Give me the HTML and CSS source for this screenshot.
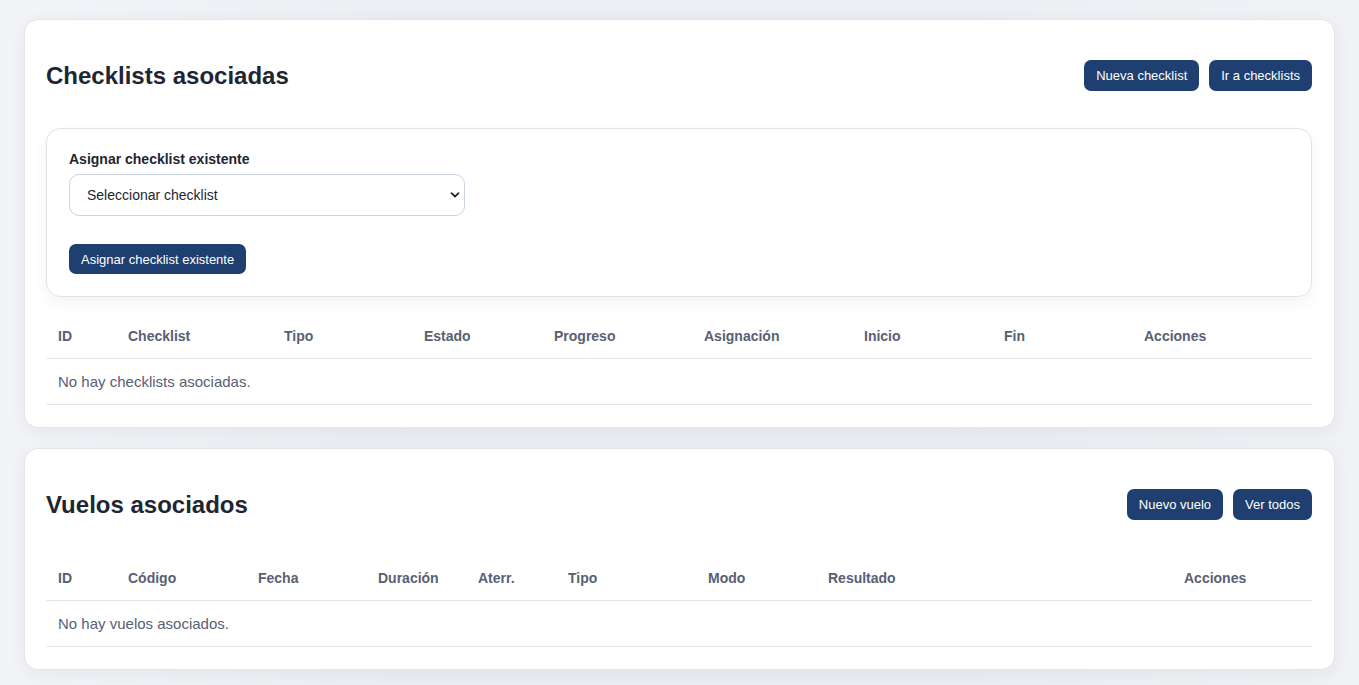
FILE: index.html
```html
<!DOCTYPE html>
<html lang="es">
  <head>
    <meta charset="utf-8">
    <title>Checklists y vuelos asociados</title>
    <link rel="stylesheet" href="styles.css">
  </head>
  <body>
    <section class="card">
      <div class="card-head">
        <h2>Checklists asociadas</h2>
        <div class="actions">
          <button class="btn">Nueva checklist</button>
          <button class="btn">Ir a checklists</button>
        </div>
      </div>

      <div class="assign-box">
        <label for="checklist">Asignar checklist existente</label>
        <div class="select-wrap">
          <select id="checklist">
            <option>Seleccionar checklist</option>
          </select>
          <svg class="chevron" width="10" height="10" viewBox="0 0 10 10">
            <path d="M1.5 3.2 L5 6.7 L8.5 3.2" fill="none" stroke="#222" stroke-width="1.7" stroke-linecap="round" stroke-linejoin="round"/>
          </svg>
        </div>
        <button class="btn">Asignar checklist existente</button>
      </div>

      <table class="list">
        <colgroup>
          <col style="width:70px"><col style="width:156px"><col style="width:140px">
          <col style="width:130px"><col style="width:150px"><col style="width:160px">
          <col style="width:140px"><col style="width:140px"><col>
        </colgroup>
        <thead>
          <tr>
            <th>ID</th><th>Checklist</th><th>Tipo</th><th>Estado</th><th>Progreso</th>
            <th>Asignación</th><th>Inicio</th><th>Fin</th><th>Acciones</th>
          </tr>
        </thead>
        <tbody>
          <tr><td colspan="9">No hay checklists asociadas.</td></tr>
        </tbody>
      </table>
    </section>

    <section class="card">
      <div class="card-head second">
        <h2>Vuelos asociados</h2>
        <div class="actions">
          <button class="btn">Nuevo vuelo</button>
          <button class="btn">Ver todos</button>
        </div>
      </div>

      <table class="list">
        <colgroup>
          <col style="width:70px"><col style="width:130px"><col style="width:120px">
          <col style="width:100px"><col style="width:90px"><col style="width:140px">
          <col style="width:120px"><col style="width:356px"><col>
        </colgroup>
        <thead>
          <tr>
            <th>ID</th><th>Código</th><th>Fecha</th><th>Duración</th><th>Aterr.</th>
            <th>Tipo</th><th>Modo</th><th>Resultado</th><th>Acciones</th>
          </tr>
        </thead>
        <tbody>
          <tr><td colspan="9">No hay vuelos asociados.</td></tr>
        </tbody>
      </table>
    </section>
  </body>
</html>
```

FILE: styles.css
```css
body {
  margin: 0;
  padding: 19px 24px;
  background: linear-gradient(90deg, #f3f4f8 0%, #eceef3 30%, #eceef3 70%, #f1f2f6 100%);
  font-family: "Liberation Sans", Arial, sans-serif;
  color: #1e2533;
}

.card {
  background: #fff;
  border: 1px solid #e3e5eb;
  border-radius: 14px;
  padding: 0 22px 22px 21px;
  box-shadow: 0 4px 18px rgba(30, 40, 70, 0.06);
  margin-bottom: 20px;
}

.card-head {
  display: flex;
  align-items: center;
  justify-content: space-between;
  padding: 40px 0 18px;
  margin-bottom: 19px;
}

.card-head.second {
  margin-bottom: 18px;
}

h2 {
  margin: 0;
  font-size: 24px;
  font-weight: bold;
  color: #1e2533;
}

.actions {
  display: flex;
  gap: 10px;
}

.btn {
  height: 31px;
  padding: 0 12px;
  border: none;
  border-radius: 7px;
  background: #1e3f6f;
  color: #fff;
  font-family: "Liberation Sans", Arial, sans-serif;
  font-size: 13px;
}

.assign-box {
  border: 1px solid #e0e2e9;
  border-radius: 14px;
  padding: 22px;
  box-shadow: 0 6px 16px rgba(30, 40, 70, 0.05);
  margin-bottom: 17px;
}

.assign-box label {
  display: block;
  font-size: 14px;
  font-weight: bold;
  line-height: 17px;
  margin-bottom: 6px;
}

.select-wrap {
  position: relative;
  width: 396px;
  margin-bottom: 28px;
}

.select-wrap select {
  appearance: none;
  width: 100%;
  height: 42px;
  padding: 0 17px;
  border: 1px solid #c9d2e2;
  border-radius: 10px;
  background: #fff;
  font-family: "Liberation Sans", Arial, sans-serif;
  font-size: 14px;
  color: #1e2533;
}

.chevron {
  position: absolute;
  right: 5px;
  top: 16px;
}

.assign-box .btn {
  height: 30px;
}

.list {
  width: 100%;
  border-collapse: collapse;
  table-layout: fixed;
  font-size: 14px;
  color: #596074;
}

.list th {
  text-align: left;
  font-weight: bold;
  height: 44px;
  padding: 0 12px;
  border-bottom: 1px solid #e2e4ea;
}

.list td {
  height: 45px;
  padding: 0 12px;
  font-size: 15px;
  border-bottom: 1px solid #e2e4ea;
}
```
